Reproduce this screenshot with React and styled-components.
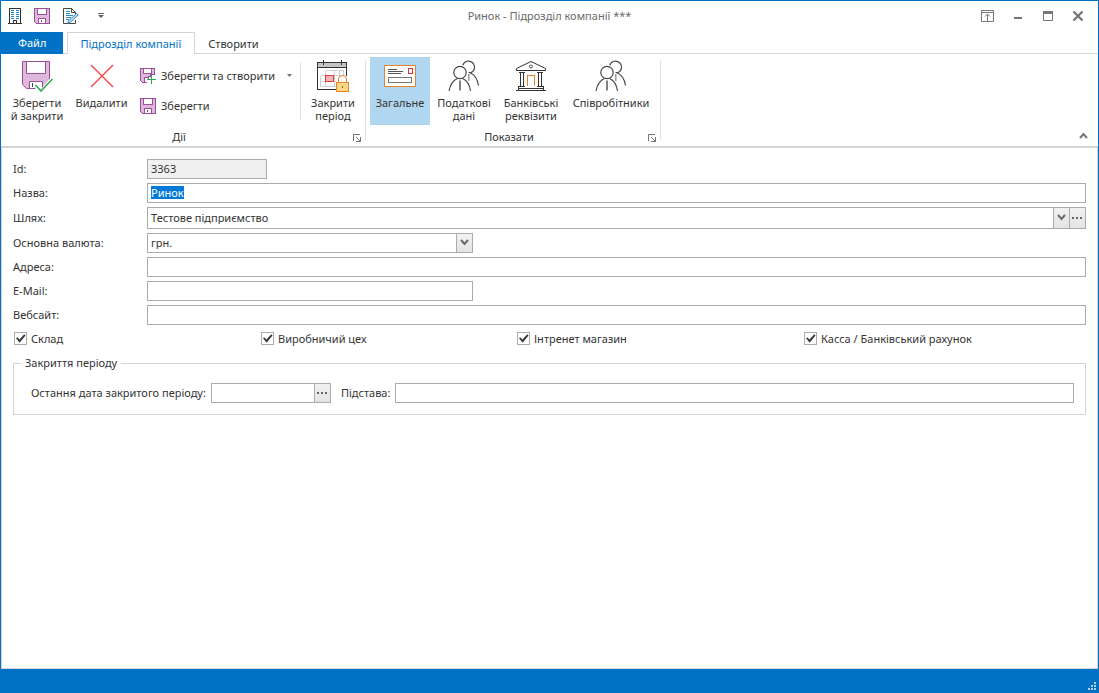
import { useEffect, useRef } from 'react';
import styled, { createGlobalStyle, ThemeProvider } from 'styled-components';

const theme = {
  accent: '#0072c6',
  text: '#333333',
  muted: '#6a6a6a',
  line: '#d4d4d4',
  fieldBorder: '#ababab',
  active: '#b1d6f0',
  purple: '#9b4f9b',
  lilac: '#deb8db',
  orange: '#ea8127',
  green: '#2aa84f',
};

const GlobalStyle = createGlobalStyle`
  *, *::before, *::after {
    box-sizing: border-box;
  }
  body {
    margin: 0;
  }
  body, button, input, select {
    font-family: 'Noto Sans', 'Open Sans', sans-serif;
    font-size: 11px;
    line-height: 13px;
    color: ${theme.text};
  }
  button {
    padding: 0;
    border: none;
    background: none;
    cursor: pointer;
  }
  svg {
    display: block;
    flex: none;
  }
`;

const Window = styled.div`
  display: flex;
  flex-direction: column;
  min-height: 100vh;
  border: 1px solid ${(props) => props.theme.accent};
  border-bottom: none;
  background: #fff;
`;

const TitleBar = styled.header`
  display: grid;
  grid-template-columns: 1fr auto 1fr;
  align-items: center;
  height: 31px;
`;

const QuickBar = styled.div`
  display: flex;
  align-items: center;
  gap: 12px;
  padding: 0 0 1px 5px;
`;

const Title = styled.h1`
  margin: 0;
  padding-bottom: 2px;
  font-size: 11px;
  font-weight: normal;
  color: ${(props) => props.theme.muted};
`;

const WindowButtons = styled.div`
  display: flex;
  justify-content: flex-end;
  gap: 14px;
  padding: 0 12px 1px 0;
`;

const Tabs = styled.nav`
  display: flex;
  height: 22px;
  box-shadow: inset 0 -1px ${(props) => props.theme.line};
`;

const FileTab = styled.button`
  padding: 0 17px 2px;
  margin-right: 4px;
  background: ${(props) => props.theme.accent};
  color: #fff;
`;

const Tab = styled.button`
  padding: 0 13px 0 12px;
  border: 1px solid transparent;
  border-bottom: none;
  ${(props) =>
    props.$active &&
    `
    background: #fff;
    border-color: ${props.theme.line};
    color: ${props.theme.accent};
  `}
`;

const Ribbon = styled.section`
  display: flex;
  height: 94px;
  border-bottom: 2px solid ${(props) => props.theme.line};
`;

const Group = styled.div`
  display: flex;
  flex-direction: column;
  padding: 3px 4px 0;
  background: linear-gradient(#e1e1e1, #e1e1e1) right 6px / 1px 80px no-repeat;
`;

const GroupItems = styled.div`
  display: flex;
  flex: none;
  gap: 1px;
  height: 68px;
`;

const GroupCaption = styled.div`
  display: flex;
  align-items: center;
  height: 21px;
  padding: 2px 1px 0 0;
  text-align: center;

  span {
    flex: 1;
  }
  button {
    padding-top: 3px;
  }
`;

const BigButton = styled.button`
  display: flex;
  flex-direction: column;
  align-items: center;
  gap: 4px;
  width: ${(props) => props.$width}px;
  padding-top: 3px;
  background: ${(props) => (props.$active ? props.theme.active : 'none')};
  white-space: nowrap;
`;

const SmallButtons = styled.div`
  display: flex;
  flex-direction: column;
  width: 164px;
  padding: 4px 6px;
`;

const SmallButton = styled.button`
  display: flex;
  align-items: center;
  gap: 5px;
  height: 30px;
  white-space: nowrap;

  span {
    padding-bottom: 2px;
  }
`;

const SplitRow = styled.div`
  display: flex;
  align-items: center;
  justify-content: space-between;
`;

const Divider = styled.div`
  width: 1px;
  height: 58px;
  margin: 5px 2px 0 1px;
  background: #e1e1e1;
`;

const Collapse = styled.button`
  align-self: flex-end;
  margin: 0 10px 7px auto;
`;

const Form = styled.form`
  flex: 1;
  padding: 11px 11px 0;
  border: 1px solid ${(props) => props.theme.line};
  border-top: none;

  label {
    padding-bottom: 1px;
  }
`;

const Fields = styled.div`
  display: grid;
  grid-template-columns: 134px 1fr;
  align-items: center;
  row-gap: 4px;
`;

const Field = styled.div`
  display: flex;
  width: ${(props) => props.$width || '100%'};
  height: ${(props) => (props.$tall ? '22px' : '20px')};
  border: 1px solid ${(props) => props.theme.fieldBorder};
  background: ${(props) => (props.$readOnly ? '#f0f0f0' : '#fff')};

  input,
  select {
    flex: 1;
    min-width: 0;
    padding: 0 3px 1px;
    border: none;
    border-radius: 0;
    outline: none;
    background: none;
    appearance: none;
  }
  ::selection {
    background: #0078d7;
    color: #fff;
  }
`;

const FieldButton = styled.button`
  display: flex;
  align-items: center;
  justify-content: center;
  width: 16px;
  border-left: 1px solid ${(props) => props.theme.fieldBorder};
  background: linear-gradient(#f1f1f1, #e3e3e3);
`;

const Checks = styled.div`
  display: grid;
  grid-template-columns: 247fr 256fr 287fr 282fr;
  padding: 7px 0 10px 1px;
`;

const Check = styled.label`
  display: flex;
  align-items: center;
  gap: 4px;

  input {
    width: 13px;
    height: 13px;
    margin: 0;
    border: 1px solid ${(props) => props.theme.fieldBorder};
    appearance: none;
  }
  input:checked::before {
    content: '';
    display: block;
    width: 11px;
    height: 11px;
    background: #3b3b3b;
    clip-path: polygon(8% 46%, 24% 40%, 40% 58%, 84% 12%, 96% 22%, 42% 88%);
  }
`;

const Period = styled.fieldset`
  margin: 0;
  padding: 12px 7px 11px;
  border: 1px solid ${(props) => props.theme.line};

  legend {
    padding: 0 4px 2px;
  }
`;

const PeriodRow = styled.div`
  display: flex;
  align-items: center;
  gap: 5px;
  padding: 0 4px 0 10px;

  label {
    flex: none;
  }
  label + div {
    flex: none;
    margin-right: 5px;
  }
  label:last-of-type + div {
    flex: 1;
    margin-right: 0;
  }
`;

const StatusBar = styled.footer`
  display: flex;
  align-items: flex-end;
  justify-content: flex-end;
  height: 24px;
  padding: 0 2px 3px;
  background: ${(props) => props.theme.accent};
`;

const BuildingIcon = () => (
  <svg width='16' height='16' fill='none' shapeRendering='crispEdges'>
    <path d='M3.5 15V.5h11V15M2 15.5h14' stroke='#333' />
    <path d='M7.5 15v-2.5h3V15' stroke='#333' />
    <path
      d='M5 2h3v1H5zM10 2h3v1h-3zM5 4h3v1H5zM10 4h3v1h-3zM5 6h3v1H5zM10 6h3v1h-3zM5 8h3v1H5zM10 8h3v1h-3zM5 10h3v1H5zM10 10h3v1h-3z'
      fill='#1e86cc'
    />
  </svg>
);

const SaveIcon = () => (
  <svg width='16' height='16' fill='none' shapeRendering='crispEdges'>
    <path d='M.5 .5h15v15h-13l-2-2z' fill={theme.lilac} stroke={theme.purple} />
    <path d='M3.5 .5h9v6h-9z' fill='#fff' stroke={theme.purple} />
    <path d='M4.5 10.5h7v5h-7z' fill='#fff' stroke={theme.purple} />
    <path d='M7.5 12v2' stroke='#555' />
  </svg>
);

const SaveNewIcon = () => (
  <svg width='16' height='16' fill='none' shapeRendering='crispEdges'>
    <path
      d='M14.5 6.5V.5H.5v12l2 2h4v-3h2v-3h2v-2z'
      fill={theme.lilac}
      stroke={theme.purple}
    />
    <path d='M3.5 .5h8v5h-8z' fill='#fff' stroke={theme.purple} />
    <path d='M5 10h3v4H5z' fill='#fff' />
    <path d='M4.5 14V9.5H8' stroke={theme.purple} />
    <path d='M11.5 7v9M7 11.5h9' stroke={theme.green} />
  </svg>
);

const EditIcon = () => (
  <svg width='17' height='16' fill='none'>
    <path d='M13.5 12v3.5h-12V.5h8l4 4V6' stroke='#444' />
    <path d='M9.5 .5v4h4' stroke='#444' />
    <path
      d='M4 3.5h4M4 5.5h4M4 7.5h7M4 9.5h5M4 11.5h3'
      stroke='#2b8ac9'
      shapeRendering='crispEdges'
    />
    <path
      d='M14.5 5.5L16.3 7.1 8 14.5 5.7 15.3 6.3 13z'
      fill='#b9daf2'
      stroke='#2b7fb8'
      strokeWidth='.9'
    />
  </svg>
);

const SaveCloseIcon = () => (
  <svg width='32' height='32' fill='none'>
    <path d='M1.5 1.5h27v27h-23l-4-4z' fill={theme.lilac} stroke={theme.purple} />
    <path d='M5.5 1.5h19v12h-19z' fill='#fff' stroke={theme.purple} />
    <path d='M8.5 28.5v-7h13v7z' fill='#fff' stroke={theme.purple} />
    <path d='M11.5 23v4' stroke='#444' />
    <path d='M12 23.5l3-1 5.5 6L30 17.5V32H18l-6-6z' fill='#fff' />
    <path d='M14.5 25l5.5 6 11.5-12' stroke={theme.green} strokeWidth='1.5' />
  </svg>
);

const DeleteIcon = () => (
  <svg width='32' height='32' fill='none'>
    <path d='M5 5l22 22M27 5L5 27' stroke='#f04040' strokeWidth='1.3' />
  </svg>
);

const CalendarIcon = () => (
  <svg width='32' height='32' fill='none' shapeRendering='crispEdges'>
    <path d='M.5 2.5h29v27H.5z' fill='#fff' />
    <path d='M1 3h29v4H1z' fill='#c4c4c4' />
    <path d='M19 29.5H.5v-27h29V16M.5 7.5h29' stroke='#333' />
    <path d='M6.5 0v5M24.5 0v5' stroke='#333' />
    <path
      d='M8.5 10.5h18v6M8.5 10.5v5M17.5 10.5v16M22.5 10.5v5M3.5 15.5h23M3.5 15.5v11h15M8.5 15v11M3.5 21.5h15'
      stroke='#d0d0d0'
    />
    <path d='M8.5 15.5h8v6h-8z' fill='#f4b6b6' stroke='#e03c3c' />
    <path
      d='M21.5 22v-3q0-3.5 4-3.5t4 3.5v3'
      fill='#fff'
      stroke={theme.orange}
      shapeRendering='auto'
    />
    <path d='M19.5 22.5h12v9h-12z' fill='#fbd886' stroke={theme.orange} />
    <path d='M25 26h1v2h-1z' fill='#b8561a' />
  </svg>
);

const CardIcon = () => (
  <svg width='32' height='32' fill='none' shapeRendering='crispEdges'>
    <path d='M.5 5.5h31v21H.5z' fill='#fff' stroke={theme.orange} />
    <path d='M4 9.5h9M4 11.5h15M4 13.5h13' stroke='#555' />
    <path d='M24.5 8.5h4v5h-4z' stroke='#ee2f2f' />
    <path d='M4.5 17.5h23v5h-23z' stroke='#777' />
  </svg>
);

const PeopleIcon = () => (
  <svg width='32' height='32' fill='none' stroke='#484848' strokeWidth='1.2'>
    <path d='M14.8 5.2a6 6 0 1 1 7.8 7.5l-2-.2' />
    <path d='M22 12.8q7 3 8.5 12.7' />
    <path d='M20.8 14v7' stroke='#999' strokeWidth='1.5' />
    <circle cx='12' cy='12.5' r='6.2' fill='#fff' />
    <path d='M1 31q2-10 8.5-12.5M14.5 18.5Q21 21 22.5 31' />
    <path d='M12 20.5v10' stroke='#808080' strokeWidth='2' />
  </svg>
);

const BankIcon = () => (
  <svg width='32' height='32' fill='none' stroke='#333'>
    <path d='M16 1.5L1.5 8.5v2h29v-2z' fill='#fff' />
    <circle cx='16' cy='6.5' r='1.5' stroke='#555' />
    <g shapeRendering='crispEdges'>
      <path d='M4 12.5h6M22 12.5h6M4 26.5h6M22 26.5h6' />
      <path d='M5.5 12v14M8.5 12v14M23.5 12v14M26.5 12v14' />
      <path d='M12.5 26V15.5h7V26' stroke={theme.orange} />
      <path d='M3 28.5h26M1 30.5h30M3.5 26v4M28.5 26v4' />
    </g>
  </svg>
);

const LauncherIcon = () => (
  <svg width='8' height='8' fill='none' stroke='#777' shapeRendering='crispEdges'>
    <path d='M.5 7V.5H7M3 3l4 4M7.5 3v4.5H3' />
  </svg>
);

const ChevronDown = () => (
  <svg width='9' height='8' fill='none' stroke='#6a6a6a' strokeWidth='2'>
    <path d='M1 1l3.5 4L8 1' />
  </svg>
);

const Dots = () => (
  <svg width='11' height='2' fill='#666' shapeRendering='crispEdges'>
    <path d='M0 0h2v2H0zM4 0h2v2H4zM8 0h2v2H8z' />
  </svg>
);

const SmallArrow = () => (
  <svg width='5' height='4' fill='#777'>
    <path d='M0 0h5L2.5 3z' />
  </svg>
);

const RibbonGroup = ({ caption, children }) => (
  <Group>
    <GroupItems>{children}</GroupItems>
    <GroupCaption>
      <span>{caption}</span>
      <button type='button' aria-label={`${caption}: параметри`}>
        <LauncherIcon />
      </button>
    </GroupCaption>
  </Group>
);

const ActionButton = ({ icon, lines, width, active }) => (
  <BigButton type='button' $width={width} $active={active}>
    {icon}
    <span>
      {lines[0]}
      {lines[1] && <br />}
      {lines[1]}
    </span>
  </BigButton>
);

const checks = [
  'Склад',
  'Виробничий цех',
  'Інтренет магазин',
  'Касса / Банківський рахунок',
];

const App = () => {
  const nameRef = useRef(null);

  useEffect(() => {
    nameRef.current.focus();
    nameRef.current.select();
  }, []);

  return (
    <ThemeProvider theme={theme}>
      <GlobalStyle />
      <Window>
        <TitleBar>
          <QuickBar>
            <BuildingIcon />
            <button type='button' aria-label='Зберегти'>
              <SaveIcon />
            </button>
            <button type='button' aria-label='Редагувати'>
              <EditIcon />
            </button>
            <button type='button' aria-label='Налаштувати панель'>
              <svg width='28' height='16' fill='#666'>
                <path d='M7 5h6v1H7zM7 7h6L10 10z' />
              </svg>
            </button>
          </QuickBar>
          <Title>Ринок - Підрозділ компанії ***</Title>
          <WindowButtons>
            <button type='button' aria-label='Параметри стрічки'>
              <svg width='16' height='16' fill='none' stroke='#777'>
                <path d='M1.5 2.5h12v11h-12zM1.5 4.5h12' />
                <path d='M7.5 13V6.5M5 8.5L7.5 6 10 8.5' />
              </svg>
            </button>
            <button type='button' aria-label='Згорнути'>
              <svg width='16' height='16' fill='#777'>
                <path d='M4 9h8v2H4z' />
              </svg>
            </button>
            <button type='button' aria-label='Розгорнути'>
              <svg width='16' height='16' fill='none' stroke='#777'>
                <path d='M3.5 3.5h9v9h-9z' />
                <path d='M3 4.5h10' strokeWidth='3' />
              </svg>
            </button>
            <button type='button' aria-label='Закрити'>
              <svg width='16' height='16' fill='none' stroke='#777' strokeWidth='2.4'>
                <path d='M3.5 3.5l9 9M12.5 3.5l-9 9' />
              </svg>
            </button>
          </WindowButtons>
        </TitleBar>

        <Tabs>
          <FileTab type='button'>Файл</FileTab>
          <Tab type='button' $active>
            Підрозділ компанії
          </Tab>
          <Tab type='button'>Створити</Tab>
        </Tabs>

        <Ribbon>
          <RibbonGroup caption='Дії'>
            <ActionButton
              icon={<SaveCloseIcon />}
              lines={['Зберегти', 'й закрити']}
              width={64}
            />
            <ActionButton icon={<DeleteIcon />} lines={['Видалити']} width={63} />
            <SmallButtons>
              <SplitRow>
                <SmallButton type='button'>
                  <SaveNewIcon />
                  <span>Зберегти та створити</span>
                </SmallButton>
                <button type='button' aria-label='Більше варіантів'>
                  <SmallArrow />
                </button>
              </SplitRow>
              <SmallButton type='button'>
                <SaveIcon />
                <span>Зберегти</span>
              </SmallButton>
            </SmallButtons>
            <Divider />
            <ActionButton
              icon={<CalendarIcon />}
              lines={['Закрити', 'період']}
              width={58}
            />
          </RibbonGroup>
          <RibbonGroup caption='Показати'>
            <ActionButton icon={<CardIcon />} lines={['Загальне']} width={60} active />
            <ActionButton
              icon={<PeopleIcon />}
              lines={['Податкові', 'дані']}
              width={66}
            />
            <ActionButton
              icon={<BankIcon />}
              lines={['Банківські', 'реквізити']}
              width={66}
            />
            <ActionButton
              icon={<PeopleIcon />}
              lines={['Співробітники']}
              width={92}
            />
          </RibbonGroup>
          <Collapse type='button' aria-label='Згорнути стрічку'>
            <svg width='9' height='7' fill='none' stroke='#777' strokeWidth='2'>
              <path d='M1 6l3.5-4L8 6' />
            </svg>
          </Collapse>
        </Ribbon>

        <Form onSubmit={(e) => e.preventDefault()}>
          <Fields>
            <label htmlFor='id'>Id:</label>
            <Field $width='120px' $readOnly>
              <input id='id' defaultValue='3363' readOnly />
            </Field>
            <label htmlFor='name'>Назва:</label>
            <Field>
              <input id='name' ref={nameRef} defaultValue='Ринок' />
            </Field>
            <label htmlFor='path'>Шлях:</label>
            <Field $tall>
              <select id='path'>
                <option>Тестове підприємство</option>
              </select>
              <FieldButton type='button' aria-label='Відкрити список'>
                <ChevronDown />
              </FieldButton>
              <FieldButton type='button' aria-label='Вибрати шлях'>
                <Dots />
              </FieldButton>
            </Field>
            <label htmlFor='currency'>Основна валюта:</label>
            <Field $width='326px'>
              <select id='currency'>
                <option>грн.</option>
              </select>
              <FieldButton type='button' aria-label='Відкрити список'>
                <ChevronDown />
              </FieldButton>
            </Field>
            <label htmlFor='address'>Адреса:</label>
            <Field>
              <input id='address' />
            </Field>
            <label htmlFor='email'>E-Mail:</label>
            <Field $width='326px'>
              <input id='email' type='email' />
            </Field>
            <label htmlFor='site'>Вебсайт:</label>
            <Field>
              <input id='site' />
            </Field>
          </Fields>

          <Checks>
            {checks.map((text) => (
              <Check key={text}>
                <input type='checkbox' defaultChecked />
                {text}
              </Check>
            ))}
          </Checks>

          <Period>
            <legend>Закриття періоду</legend>
            <PeriodRow>
              <label htmlFor='lastDate'>Остання дата закритого періоду:</label>
              <Field $width='120px'>
                <input id='lastDate' />
                <FieldButton type='button' aria-label='Вибрати дату'>
                  <Dots />
                </FieldButton>
              </Field>
              <label htmlFor='reason'>Підстава:</label>
              <Field>
                <input id='reason' />
              </Field>
            </PeriodRow>
          </Period>
        </Form>

        <StatusBar>
          <svg width='8' height='8' fill='#b8cfe2' shapeRendering='crispEdges'>
            <path d='M6 0h2v2H6zM3 3h2v2H3zM6 3h2v2H6zM0 6h2v2H0zM3 6h2v2H3zM6 6h2v2H6z' />
          </svg>
        </StatusBar>
      </Window>
    </ThemeProvider>
  );
};

export default App;
